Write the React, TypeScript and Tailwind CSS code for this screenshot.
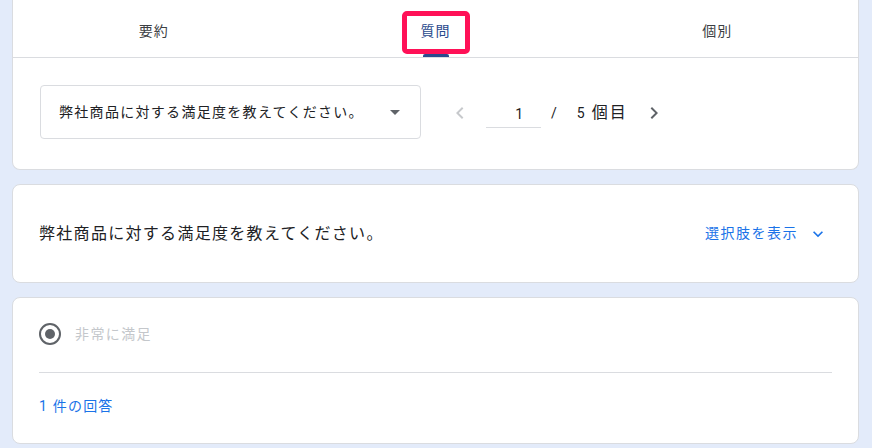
import React from "react";

const font = { fontFamily: 'Roboto, "Noto Sans CJK JP", "Noto Sans", sans-serif' };

export default function App() {
  return (
    <div className="w-[872px] h-[448px] overflow-hidden bg-[#e3ebfa] pl-3 pr-[13px]" style={font}>
      {/* Card 1 */}
      <div className="relative bg-white border border-t-0 border-[#dadce0] rounded-b-lg h-[170px]">
        <div className="flex h-[58px] border-b border-[#dadce0]">
          <div className="flex-1 flex items-center justify-center pt-[6px] text-[14px] tracking-[1px] text-[#3c4043]">要約</div>
          <div className="relative flex-1 flex items-center justify-center pt-[6px] text-[14px] tracking-[1px] text-[#2a4b8d]">
            <span>質問</span>
            <div className="absolute bottom-0 left-1/2 -translate-x-1/2 w-[26px] h-[3px] rounded-t-[2px] bg-[#2a4b8d]" />
          </div>
          <div className="flex-1 flex items-center justify-center pt-[6px] text-[14px] tracking-[1px] text-[#3c4043]">個別</div>
        </div>
        <div className="absolute left-[389px] top-[11px] w-[68px] h-[43px] border-[5px] border-[#ff1157] rounded-[5px]" />
        <div className="flex items-center pl-[27px] pt-[27px]">
          <div className="w-[381px] h-[54px] border border-[#dadce0] rounded-[4px] flex items-center pl-[18px] pr-[20px] justify-between">
            <span className="text-[14px] tracking-[1.3px] text-[#202124]">弊社商品に対する満足度を教えてください。</span>
            <svg width="10" height="5" viewBox="0 0 10 5"><path d="M0 0L5 5L10 0Z" fill="#5f6368" /></svg>
          </div>
          <div className="flex items-center ml-[27px] mt-[2px]">
            <svg width="24" height="24" viewBox="0 0 24 24"><path d="M15.4 7.4L14 6l-6 6 6 6 1.4-1.4L10.8 12z" fill="#c7c9cc" /></svg>
            <div className="ml-[14px] w-[55px] h-[30px] border-b border-[#dadce0] flex items-center justify-end pr-[18px] text-[14px] text-[#202124] pt-[4px]">1</div>
            <span className="ml-[10px] text-[14px] text-[#202124] pt-[1px]">/</span>
            <span className="ml-[20px] text-[14px] text-[#202124] pt-[1px]">5</span>
            <span className="ml-[7px] text-[16px] tracking-[2px] text-[#202124]">個目</span>
            <svg className="ml-[14px]" width="24" height="24" viewBox="0 0 24 24"><path d="M8.6 16.6L10 18l6-6-6-6-1.4 1.4 4.6 4.6z" fill="#5f6368" /></svg>
          </div>
        </div>
      </div>

      {/* Card 2 */}
      <div className="mt-[14px] bg-white border border-[#dadce0] rounded-lg h-[99px] flex items-center justify-between pl-[26px] pr-[30px]">
        <span className="text-[16px] tracking-[1.3px] text-[#202124]">弊社商品に対する満足度を教えてください。</span>
        <div className="flex items-center text-[#1a73e8]">
          <span className="text-[14px] tracking-[1.5px]">選択肢を表示</span>
          <svg className="ml-[10px]" width="20" height="20" viewBox="0 0 24 24"><path d="M7.41 8.59L12 13.17l4.59-4.58L18 10l-6 6-6-6z" fill="#1a73e8" /></svg>
        </div>
      </div>

      {/* Card 3 */}
      <div className="mt-[14px] bg-white border border-[#dadce0] rounded-lg h-[147px] px-[26px] pt-[24px]">
        <div className="flex items-center h-[24px]">
          <div className="w-[22px] h-[22px] rounded-full border-[2px] border-[#5f6368] flex items-center justify-center">
            <div className="w-[10px] h-[10px] rounded-full bg-[#5f6368]" />
          </div>
          <span className="ml-[14px] text-[14px] tracking-[1.4px] text-[#c4c7cb]">非常に満足</span>
        </div>
        <div className="mt-[26px] border-t border-[#dadce0]" />
        <div className="mt-[23px] text-[14px] tracking-[1.2px] text-[#1a73e8]">1 件の回答</div>
      </div>
    </div>
  );
}
